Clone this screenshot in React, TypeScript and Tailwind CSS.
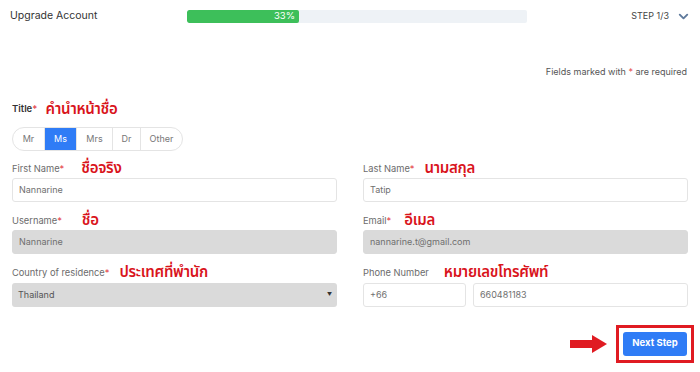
import { ChevronDown } from 'lucide-react';

const thai = "font-['Noto_Sans_Thai','Loma','Garuda','Norasi','DejaVu_Sans',sans-serif]";

function Note({ text, className = '' }: { text: string; className?: string }) {
    return (
        <span className={`${thai} text-[15px] leading-none font-semibold tracking-[-0.3px] text-[#d9141c] ${className}`}>{text}</span>
    );
}

function Label({ text, required, note, noteGap }: { text: string; required?: boolean; note: string; noteGap: string }) {
    return (
        <div className="h-[18px] flex items-center whitespace-nowrap">
            <span className="text-[9.3px] text-[#6b6b6b]">
                {text}
                {required && <span className="text-[#e5484d]">*</span>}
            </span>
            <Note text={note} className={noteGap} />
        </div>
    );
}

function Field({ value, disabled, className = '' }: { value: string; disabled?: boolean; className?: string }) {
    return (
        <div
            className={`h-[24px] flex items-center px-[6px] rounded-[3px] border text-[9px] text-[#6f6f6f] ${
                disabled ? 'bg-[#dadada] border-[#dadada]' : 'bg-white border-[#e4e4e4]'
            } ${className}`}
        >
            {value}
        </div>
    );
}

export default function App() {
    const titles = ['Mr', 'Ms', 'Mrs', 'Dr', 'Other'];
    const widths = ['w-[31px]', 'w-[32px]', 'w-[36px]', 'w-[28px]', 'w-[42px]'];

    return (
        <main className="w-[700px] h-[372px] bg-white font-['Inter',sans-serif] overflow-hidden">
            {/* header with progress */}
            <div className="h-[32px] flex items-center">
                <div className="w-[187px] pl-[10px] text-[10.5px] text-[#333]">Upgrade Account</div>
                <div className="w-[340px] h-[13px] bg-[#eef2f6] rounded-[2px] overflow-hidden">
                    <div className="w-[112px] h-full bg-[#3dbf5a] rounded-[2px] flex items-center justify-end pr-[4px] text-[9.5px] text-white">
                        33%
                    </div>
                </div>
                <div className="flex-1 flex items-center justify-end pr-[9px] gap-[7px]">
                    <span className="text-[9px] text-[#444]">STEP 1/3</span>
                    <ChevronDown className="w-[15px] h-[15px] text-[#5f7a9c]" strokeWidth={3} />
                </div>
            </div>

            <div className="mt-[33px] pr-[13px] text-right text-[9px] text-[#555]">
                Fields marked with <span className="text-[#e5484d]">*</span> are required
            </div>

            <div className="px-[12px]">
                {/* title */}
                <div className="mt-[22px] h-[18px] flex items-center">
                    <span className="text-[9.5px] font-semibold text-[#333]">
                        Title<span className="text-[#e5484d]">*</span>
                    </span>
                    <Note text="คำนำหน้าชื่อ" className="ml-[8px]" />
                </div>
                <div className="mt-[8px] inline-flex h-[24px] rounded-full border border-[#e4e4e4] overflow-hidden">
                    {titles.map((t, i) => (
                        <div
                            key={t}
                            className={`${widths[i]} flex items-center justify-center text-[9px] ${
                                i > 0 ? 'border-l border-[#e4e4e4]' : ''
                            } ${t === 'Ms' ? 'bg-[#2f7cf6] text-white' : 'text-[#777]'}`}
                        >
                            {t}
                        </div>
                    ))}
                </div>

                {/* form grid */}
                <div className="mt-[9px] grid grid-cols-2 gap-x-[26px] gap-y-[10px]">
                    <div>
                        <Label text="First Name" required note="ชื่อจริง" noteGap="ml-[17px]" />
                        <Field value="Nannarine" />
                    </div>
                    <div>
                        <Label text="Last Name" required note="นามสกุล" noteGap="ml-[10px]" />
                        <Field value="Tatip" />
                    </div>
                    <div>
                        <Label text="Username" required note="ชื่อ" noteGap="ml-[20px]" />
                        <Field value="Nannarine" disabled />
                    </div>
                    <div>
                        <Label text="Email" required note="อีเมล" noteGap="ml-[13px]" />
                        <Field value="nannarine.t@gmail.com" disabled />
                    </div>
                    <div>
                        <Label text="Country of residence" required note="ประเทศที่พำนัก" noteGap="ml-[10px]" />
                        <div className="mt-[1px] h-[24px] flex items-center justify-between pl-[6px] pr-[5px] rounded-[3px] bg-[#dadada] text-[9px] text-[#555]">
                            <span>Thailand</span>
                            <span className="text-[5px] text-[#333]">▼</span>
                        </div>
                    </div>
                    <div>
                        <Label text="Phone Number" note="หมายเลขโทรศัพท์" noteGap="ml-[15px]" />
                        <div className="mt-[1px] flex gap-[7px]">
                            <Field value="+66" className="w-[103px]" />
                            <Field value="660481183" className="flex-1" />
                        </div>
                    </div>
                </div>

                {/* next step */}
                <div className="mt-[18px] -mr-[6px] flex items-center justify-end">
                    <svg width="38" height="18" viewBox="0 0 38 18" className="mr-[8px]">
                        <rect x="0" y="5" width="24" height="8" fill="#e01b22" />
                        <polygon points="22,0 37,9 22,18" fill="#e01b22" />
                    </svg>
                    <div className="w-[78px] h-[38px] border-[3px] border-[#e01b22] flex items-center justify-center">
                        <div className="w-[64px] h-[24px] rounded-[3px] bg-[#2f7cf6] text-white text-[9.5px] font-bold flex items-center justify-center">
                            Next Step
                        </div>
                    </div>
                </div>
            </div>
        </main>
    );
}
